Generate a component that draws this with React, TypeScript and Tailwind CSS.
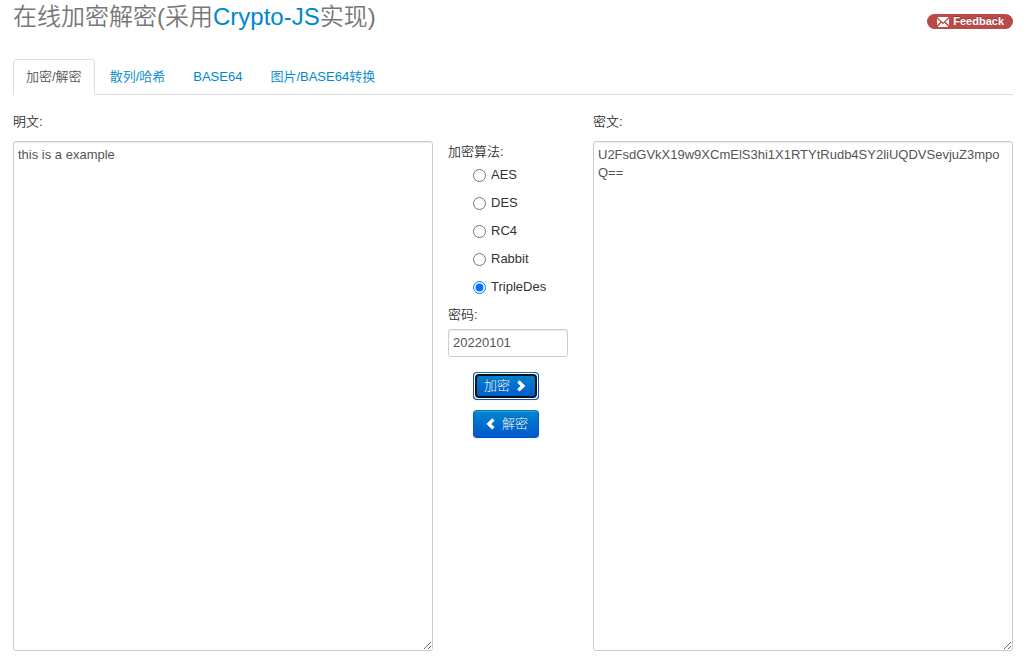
import { useState } from 'react';
import type { ReactNode } from 'react';

const tabs = ['加密/解密', '散列/哈希', 'BASE64', '图片/BASE64转换'];
const algorithms = ['AES', 'DES', 'RC4', 'Rabbit', 'TripleDes'];

const fieldClass =
  'block w-full rounded-[3px] border border-[#cccccc] bg-white px-1 text-[13px] text-[#555555] shadow-[inset_0_1px_1px_rgba(0,0,0,0.075)] outline-none';

function Chevron({ left }: { left?: boolean }) {
  return (
    <svg width="14" height="14" viewBox="0 0 14 14" fill="currentColor" aria-hidden="true">
      {left ? (
        <path d="M10.6 3.6 8.2 1.2 2.4 6.9 8.2 12.6 10.6 10.2 7.3 6.9Z" />
      ) : (
        <path d="M3.2 3.6 5.6 1.2 11.4 6.9 5.6 12.6 3.2 10.2 6.5 6.9Z" />
      )}
    </svg>
  );
}

function Envelope() {
  return (
    <svg width="12" height="10" viewBox="0 0 12 10" aria-hidden="true">
      <path fill="#fff" d="M0.3 0h11.4L6 5.4ZM0 1.5 3.5 4.8 0 8.3ZM12 1.5 8.5 4.8 12 8.3ZM.6 10l3.8-4.2L6 7.2l1.6-1.4 3.8 4.2Z" />
    </svg>
  );
}

function PrimaryButton({ children, focused }: { children: ReactNode; focused?: boolean }) {
  return (
    <button
      type="button"
      autoFocus={focused}
      className="flex h-7 w-[66px] items-center justify-center gap-1 rounded-[4px] border border-[#0055cc] border-t-[#0077bb] bg-linear-to-b from-[#0088cc] to-[#0055cc] bg-origin-border text-[13px] font-light text-white shadow-[inset_0_1px_0_rgba(255,255,255,0.2),0_1px_2px_rgba(0,0,0,0.05)] [text-shadow:0_-1px_0_rgba(0,0,0,0.25)] focus:[outline:5px_auto_-webkit-focus-ring-color] focus:-outline-offset-2"
    >
      {children}
    </button>
  );
}

export default function App() {
  const [algorithm, setAlgorithm] = useState('TripleDes');

  return (
    <div
      lang="zh-CN"
      className="bg-white pr-5 pl-[13px] pb-4 font-['Liberation_Sans','Noto_Sans_CJK_SC',sans-serif] text-[13px] leading-[18px] font-[350] text-[#333333]"
    >
      <header className="flex items-start justify-between">
        <h1 className="text-2xl leading-[34px] font-[350] text-[#777777]">
          在线加密解密(采用
          <a href="#crypto-js" className="text-[#0088cc]">Crypto-JS</a>
          实现)
        </h1>
        <a
          href="#feedback"
          className="mt-3.5 flex h-[15px] items-center gap-1 rounded-full bg-[#b94a48] pr-[9px] pl-2.5 text-[11px] leading-[14px] font-bold text-white [text-shadow:0_-1px_0_rgba(0,0,0,0.25)]"
        >
          <Envelope />
          <span className="self-start">Feedback</span>
        </a>
      </header>

      <nav className="mt-[25px] flex gap-0.5 border-b border-[#dddddd]">
        {tabs.map((tab, i) => (
          <a
            key={tab}
            href="#tab"
            className={
              i === 0
                ? '-mb-px rounded-t-[4px] border border-[#dddddd] border-b-white bg-white px-3 py-2 text-[#555555]'
                : '-mb-px border border-transparent px-3 py-2 text-[#0088cc]'
            }
          >
            {tab}
          </a>
        ))}
      </nav>

      <main className="mt-[18px] flex">
        <div className="min-w-0 flex-1">
          <label htmlFor="plain" className="mb-2.5 block">明文:</label>
          <textarea id="plain" className={`${fieldClass} h-[510px] py-1`} defaultValue="this is a example" />
        </div>

        <div className="w-40 shrink-0 pt-[30px] pr-[25px] pl-[15px]">
          <fieldset>
            <legend>加密算法:</legend>
            <div className="flex flex-col gap-2.5 pt-[5px] pl-[25px]">
              {algorithms.map((name) => (
                <label key={name} className="flex items-center gap-[5px]">
                  <input
                    type="radio"
                    name="algorithm"
                    className="size-[13px]"
                    checked={algorithm === name}
                    onChange={() => setAlgorithm(name)}
                  />
                  {name}
                </label>
              ))}
            </div>
          </fieldset>
          <label htmlFor="password" className="mt-2.5 mb-[5px] block">密码:</label>
          <input id="password" type="text" className={`${fieldClass} h-7 pb-0.5`} defaultValue="20220101" />
          <div className="mt-[15px] flex flex-col gap-2.5 pl-[25px]">
            <PrimaryButton focused>
              加密
              <Chevron />
            </PrimaryButton>
            <PrimaryButton>
              <Chevron left />
              解密
            </PrimaryButton>
          </div>
        </div>

        <div className="min-w-0 flex-1">
          <label htmlFor="cipher" className="mb-2.5 block">密文:</label>
          <textarea
            id="cipher"
            className={`${fieldClass} h-[510px] py-1 break-words`}
            defaultValue="U2FsdGVkX19w9XCmElS3hi1X1RTYtRudb4SY2liUQDVSevjuZ3mpoQ=="
          />
        </div>
      </main>
    </div>
  );
}
